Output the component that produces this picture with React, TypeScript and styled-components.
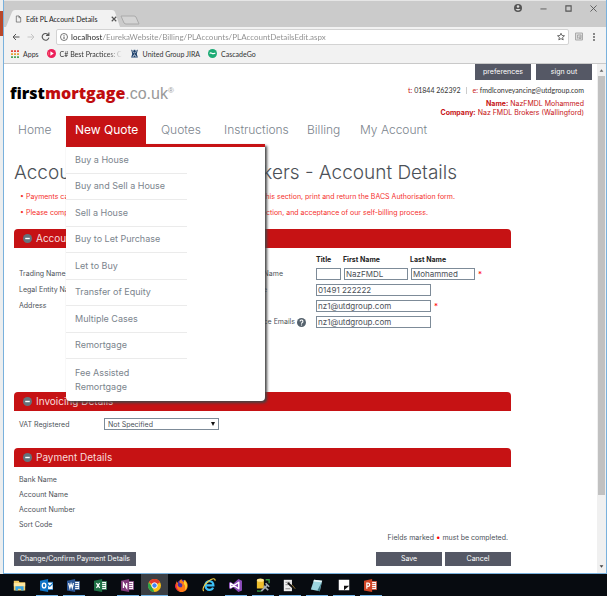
import React from 'react';
import styled, { createGlobalStyle, css } from 'styled-components';

const RED = '#c61214';
const SLATE = '#555865';
const GREY = '#7b848d';

const Global = createGlobalStyle`
  *, *::before, *::after { box-sizing: border-box; }
  body { margin: 0; background: #e9ebed; font-family: Inter, "Liberation Sans", sans-serif; }
  button, input, select { font: inherit; color: inherit; margin: 0; }
  ul { list-style: none; margin: 0; padding: 0; }
  a { color: inherit; text-decoration: none; }
`;

const Desktop = styled.div`
  min-height: 100vh;
  display: flex;
  flex-direction: column;
  background: #000;
`;
const Stage = styled.div`
  flex: 1;
  display: flex;
  background: #e4e8eb;
`;
const BackWindow = styled.div`
  width: 3px;
  display: flex;
  flex-direction: column;
  background: #eceeef;
  padding-top: 11px;
`;
const BackStripe = styled.span`
  height: 25px;
  background: #b9472a;
`;
const Window = styled.div`
  flex: 1;
  min-width: 0;
  display: flex;
  flex-direction: column;
  background: #fff;
  border: solid #79b1dd;
  border-width: 0 1px 1px;
`;

/* Browser chrome */
const TitleBar = styled.header`
  height: 27px;
  border-top: 1px solid #e6e6e6;
  background: #cbcbcb;
  display: flex;
  align-items: flex-end;
  justify-content: space-between;
`;
const Tabs = styled.div`
  display: flex;
  padding-left: 2px;
  align-items: flex-end;
`;
const Tab = styled.div`
  position: relative;
  display: flex;
  align-items: center;
  gap: 4px;
  height: 17px;
  width: 114px;
  padding-left: 9px;
  font: 7px/16px Lato, sans-serif;
  color: #222;
  white-space: nowrap;
`;
const TabShape = styled.svg`
  position: absolute;
  inset: 0;
`;
const TabText = styled.span`
  position: relative;
  flex: 1;
`;
const IconButton = styled.button<{ $w?: number }>`
  position: relative;
  display: flex;
  align-items: center;
  justify-content: center;
  width: ${(p) => p.$w ?? 10}px;
  height: 12px;
  padding: 0;
  border: 0;
  background: none;
  flex: none;
`;
const NewTab = styled(IconButton)`
  height: 15px;
`;
const WindowButtons = styled.div`
  display: flex;
  align-self: flex-start;
  gap: 15px;
  padding: 1px 8px 0 0;
`;
const Toolbar = styled.div`
  height: 19px;
  display: flex;
  align-items: center;
  gap: 6px;
  padding: 0 7px;
  background: #f2f2f2;
`;
const Address = styled.div`
  flex: 1;
  display: flex;
  align-items: center;
  height: 16px;
  padding: 0 3px;
  background: #fff;
  border: 1px solid #d3d3d3;
  border-radius: 2px;
`;
const UrlInput = styled.input`
  flex: 1;
  min-width: 0;
  padding: 0 0 0 3px;
  border: 0;
  outline: 0;
  font: 8px/14px Lato, sans-serif;
  color: transparent;
  background: linear-gradient(90deg, #222 34px, #8c8c8c 34px);
  background-clip: text;
  -webkit-background-clip: text;
`;
const Bookmarks = styled.nav`
  height: 18px;
  display: flex;
  align-items: center;
  gap: 8px;
  padding: 0 7px 2px;
  background: #f2f2f2;
  border-bottom: 1px solid #c9c9c9;
  font: 7px/14px Lato, sans-serif;
  color: #333;
`;
const Bookmark = styled.a<{ $fade?: boolean }>`
  display: flex;
  align-items: center;
  gap: 4px;
  white-space: nowrap;
  ${(p) => p.$fade && css`
    width: 75px;
    mask-image: linear-gradient(90deg, #000 80%, transparent);
  `}
  svg { flex: none; }
`;

/* Page */
const Viewport = styled.div`
  flex: 1;
  display: flex;
`;
const Page = styled.div`
  flex: 1;
  min-width: 0;
  color: #4c5158;
`;
const Scroll = styled.div`
  width: 9px;
  background: #f0f0f0;
  display: flex;
  flex-direction: column;
  align-items: center;
  padding: 4px 0;
  gap: 3px;
`;
const Thumb = styled.span`
  flex: 1;
  width: 7px;
  margin-bottom: 66px;
  background: #c1c1c1;
`;
const Header = styled.header`
  display: flex;
  justify-content: space-between;
  height: 52px;
  padding: 0 5px 0 6px;
`;
const Logo = styled.a`
  padding-top: 18px;
  font: 800 16px/22px "Open Sans", sans-serif;
  color: #000;
  white-space: nowrap;
`;
const LogoRed = styled.span`color: #c00d0f;`;
const LogoGrey = styled.span`
  font: 16px/22px "Liberation Sans", sans-serif;
  color: #999;
  sup { font-size: 8px; line-height: 8px; }
`;
const Account = styled.div`
  display: flex;
  flex-direction: column;
  align-items: flex-end;
`;
const AccountButtons = styled.div`
  display: flex;
  gap: 5px;
  margin-bottom: 5px;
`;
const Button = styled.button<{ $w: number; $h: number }>`
  width: ${(p) => p.$w}px;
  height: ${(p) => p.$h}px;
  padding: 0;
  border: 0;
  background: ${SLATE};
  color: #fff;
  font-size: 7px;
  line-height: 10px;
  white-space: nowrap;
`;
const Contact = styled.div`
  display: flex;
  align-items: center;
  margin: 0 8px 4px 0;
  font-family: Lato, sans-serif;
  font-size: 7px;
  line-height: 10px;
  color: #333;
  i { font-style: normal; color: ${RED}; }
  span + span { margin-left: 5px; padding-left: 6px; border-left: 1px solid #ccc; line-height: 7px; }
`;
const Who = styled.div`
  margin-right: 8px;
  font-size: 7px;
  line-height: 9px;
  color: ${RED};
`;
const Nav = styled.ul`
  display: flex;
  gap: 6px;
  padding-left: 5px;
  height: 28px;
  font-size: 12px;
  line-height: 28px;
  color: ${GREY};
`;
const NavItem = styled.li<{ $w: number; $open?: boolean }>`
  position: relative;
  width: ${(p) => p.$w}px;
  padding-left: 9px;
  font-weight: 300;
  white-space: nowrap;
  ${(p) => p.$open && css`background: ${RED}; color: #fff; font-weight: 400;`}
`;
const Menu = styled.ul`
  position: absolute;
  z-index: 2;
  top: 28px;
  left: 0;
  width: 199px;
  height: 257px;
  display: grid;
  grid-template-rows: repeat(8, 1fr) 42px;
  padding: 0 78px 0 0;
  background: #fff;
  border-top: 3px solid ${RED};
  border-radius: 0 0 4px 4px;
  box-shadow: 2px 2px 3px #444;
  color: ${GREY};
  font-size: 9px;
  font-weight: 400;
`;
const MenuItem = styled.li`
  display: flex;
  align-items: center;
  padding-left: 9px;
  line-height: 14px;
  white-space: normal;
  border-bottom: 1px solid #ebebeb;
  &:last-child { border: 0; padding-right: 40px; }
`;
const Main = styled.main`
  padding: 17px 86px 7px 10px;
`;
const Title = styled.h1`
  display: flex;
  justify-content: space-between;
  width: 443px;
  margin: 0;
  font-size: 19px;
  line-height: 24px;
  font-weight: 300;
  white-space: nowrap;
`;
const Notes = styled.ul`
  padding: 4px 0 8px 6px;
  font-size: 7px;
  line-height: 16px;
  color: #f5302c;
  white-space: nowrap;
`;
const Note = styled.li<{ $w: number }>`
  display: flex;
  justify-content: space-between;
  width: ${(p) => p.$w}px;
`;
const Section = styled.section<{ $h: number }>`
  min-height: ${(p) => p.$h}px;
`;
const Bar = styled.h2`
  display: flex;
  align-items: center;
  gap: 4px;
  height: 19px;
  margin: 0;
  padding: 0 9px 1px;
  background: ${RED};
  border-radius: 4px 4px 0 0;
  color: #f8dcdc;
  font-size: 10px;
  font-weight: 400;
`;
const Columns = styled.div<{ $top: number }>`
  display: grid;
  grid-template-columns: 200px 1fr;
  padding: ${(p) => p.$top}px 0 0 5px;
  font-size: 7px;
`;
const Labels = styled.div<{ $line: number; $top?: number }>`
  padding-top: ${(p) => p.$top ?? 0}px;
  line-height: ${(p) => p.$line}px;
`;
const Fields = styled.div`
  display: grid;
  grid-template-columns: 95px 1fr;
  column-gap: 2px;
  row-gap: 4px;
  align-items: center;
`;
const FieldLabel = styled.label<{ $end: number }>`
  display: flex;
  align-items: center;
  justify-content: flex-end;
  gap: 2px;
  padding-right: ${(p) => p.$end}px;
  line-height: 12px;
  white-space: nowrap;
`;
const Line = styled.div`
  display: flex;
  align-items: center;
  gap: 3px;
  line-height: 8px;
`;
const Head = styled.label<{ $w: number }>`
  width: ${(p) => p.$w}px;
  font-weight: 700;
  color: #222;
`;
const TextBox = styled.input<{ $w: number }>`
  width: ${(p) => p.$w}px;
  height: 12px;
  padding: 0 1px;
  border: 1px solid #7d8b98;
  background: #fff;
  font-size: 8px;
`;
const Star = styled.span`
  color: #f00;
  font-size: 8px;
`;
const FormRow = styled.div`
  display: flex;
  align-items: center;
  padding: 7px 0 0 5px;
  font-size: 7px;
  label { width: 85px; }
`;
const SelectWrap = styled.span`
  position: relative;
  display: flex;
  &::after {
    content: '';
    position: absolute;
    right: 4px;
    top: 4px;
    border: solid transparent;
    border-width: 4px 2px 0;
    border-top-color: #111;
    pointer-events: none;
  }
`;
const Select = styled.select`
  appearance: none;
  width: 115px;
  height: 12px;
  padding: 0 3px;
  border: 1px solid #7d8b98;
  border-radius: 0;
  background: #fff;
  font-size: 7px;
`;
const Required = styled.p`
  margin: 0;
  padding-right: 3px;
  text-align: right;
  font-size: 7px;
  line-height: 10px;
`;
const Actions = styled.div`
  display: flex;
  gap: 3px;
  padding-top: 9px;
  button:first-child { margin-right: auto; }
`;

/* Taskbar */
const Taskbar = styled.footer`
  height: 22px;
  display: flex;
  padding-left: 6px;
  background: #070b10;
`;
const Task = styled.button<{ $running?: boolean; $active?: boolean }>`
  width: 27px;
  height: 22px;
  padding: 0;
  border: 0;
  display: flex;
  align-items: center;
  justify-content: center;
  background: ${(p) => (p.$active ? '#3b3f44' : 'none')};
  ${(p) => p.$running && css`
    background-image: linear-gradient(#76b9ed, #76b9ed);
    background-size: ${p.$active ? '27px' : '22px'} 1px;
    background-position: center bottom;
    background-repeat: no-repeat;
  `}
`;

const Svg = ({ s = 10, v = 16, children }: { s?: number; v?: number; children: React.ReactNode }) => (
  <svg width={s} height={s} viewBox={`0 0 ${v} ${v}`} fill="none" stroke="#555" strokeWidth="2" aria-hidden="true">{children}</svg>
);

const Minus = () => (
  <Svg s={9}><circle cx="8" cy="8" r="8" fill="#64737c" stroke="none" /><path d="M4 8h8" stroke="#fff" strokeWidth="2.5" /></Svg>
);

const Office = ({ color, children }: { color: string; children: React.ReactNode }) => (
  <Svg s={13}>
    <path d="M8 3h7.5v10H8z" fill="#fff" stroke={color} strokeWidth="1" />
    <path d="M10 5.5h4M10 8h4M10 10.500h4" stroke={color} strokeWidth="1" />
    <path d="M0 2l10-2v16L0 14z" fill={color} stroke="none" />
    <g stroke="#fff" strokeWidth="1.500">{children}</g>
  </Svg>
);

const tasks: { name: string; running?: boolean; active?: boolean; icon: React.ReactNode }[] = [
  { name: 'File Explorer', icon: <Svg s={13}><path d="M1 2h6l1 2h7v10H1z" fill="#f5cf68" stroke="none" /><path d="M1 5h14v4H1z" fill="#ffe8a0" stroke="none" /><path d="M3 14V9h10v5h-3v-2H6v2z" fill="#37a6e6" stroke="none" /></Svg> },
  { name: 'Outlook', running: true, icon: <Svg s={13}><path d="M8 4h8v9H8z" fill="#fff" stroke="#1279c8" strokeWidth="1" /><path d="M8 5l4 4 4-4" stroke="#1279c8" strokeWidth="1.500" /><path d="M0 2l10-2v16L0 14z" fill="#0f74c6" stroke="none" /><ellipse cx="5" cy="8" rx="2.200" ry="3" stroke="#fff" strokeWidth="1.600" /></Svg> },
  { name: 'Word', running: true, icon: <Office color="#2b5797"><path d="M2 5l1.500 6L5 6l1.500 5L8 5" /></Office> },
  { name: 'Excel', icon: <Office color="#1e7145"><path d="M3 5l4 6M7 5l-4 6" /></Office> },
  { name: 'OneNote', running: true, icon: <Office color="#80397b"><path d="M3 11V5l4 6V5" /></Office> },
  { name: 'Chrome', running: true, active: true, icon: <Svg s={13}><circle cx="8" cy="8" r="8" fill="#fbc116" stroke="none" /><path d="M8 8L1.070 4A8 8 0 0 1 14.930 4z" fill="#e33b2e" stroke="none" /><path d="M1.070 4L5 10.500 8 16A8 8 0 0 1 1.070 4z" fill="#2ba24c" stroke="none" /><circle cx="8" cy="8" r="3.300" fill="#4285f4" stroke="#fff" strokeWidth="1.200" /></Svg> },
  { name: 'Firefox', icon: <Svg s={13}><circle cx="8.500" cy="7" r="6" fill="#4b2fa8" stroke="none" /><path d="M2 3c-3 6 0 13 6 13 6 0 9-6 7-11-1-2-2-3-3-4 1 3 0 4 0 4-2-3-4-2-4-5-3 2-3 4-2 5 3 0 4 3 2 5-3 1-6-2-4-5-1 0-2-1-2-4z" fill="#ff7a18" stroke="none" /><path d="M11 1c5 4 5 10 1 13 1-3 1-6-1-8z" fill="#ffd02e" stroke="none" /><path d="M2 5c-1 5 1 9 5 10-4 0-7-3-7-6 0-2 1-3 2-4z" fill="#e81f45" stroke="none" /></Svg> },
  { name: 'Internet Explorer', icon: <Svg s={14}><path d="M4 8.500h9c0-3-2-5-4.500-5S4 5.500 4 8.500s2 5 4.500 5c2 0 3.500-1 4.200-2.500" stroke="#3cc0f5" strokeWidth="2.600" /><path d="M2 15c-2-2 0-7 5-11s8-4 8-1" stroke="#f4ce3f" strokeWidth="1.300" /></Svg> },
  { name: 'Visual Studio', running: true, icon: <Svg s={13}><path d="M11.500 0L16 2v12l-4.500 2L5 10 2 12.500 0 11.500v-7l2-1L5 6z" fill="#8a4bb8" stroke="none" /><path d="M2 5.500v5L12 4v8z" stroke="#fff" strokeWidth="1.800" strokeLinejoin="round" /></Svg> },
  { name: 'SQL Server Management Studio', running: true, icon: <Svg s={14}><path d="M1 2h8v10H1z" fill="#efbf2c" stroke="none" /><ellipse cx="5" cy="2.500" rx="4" ry="1.800" fill="#ffe58a" stroke="none" /><path d="M11 2h4v4M2 14v1h4" stroke="#3d9b45" strokeWidth="1.500" /><path d="M6 15l7-7M9 9l5 5M11 6l4 4" stroke="#a5adb2" /></Svg> },
  { name: 'Script Editor', running: true, icon: <Svg s={13}><path d="M1 1h10v14H1z" fill="#eee" stroke="none" /><path d="M3 4h6M3 7h3M3 12h6" stroke="#777" strokeWidth="1" /><path d="M6 5l8 7" stroke="#111" strokeWidth="2.500" /><path d="M11 7l4 5" stroke="#a9843b" strokeWidth="1" /></Svg> },
  { name: 'Notepad', running: true, icon: <Svg s={13}><path d="M5 1l10 1-3 13-11-2z" fill="#9dd5df" stroke="none" /><path d="M5 1l10 1-1 2-10-1z" fill="#e7f5f7" stroke="none" /><path d="M9 14l5-9-2 10z" fill="#3c7683" stroke="none" /></Svg> },
  { name: 'Sticky Notes', running: true, icon: <Svg s={12}><path d="M1 1h14v14H1z" fill="#fff" stroke="none" /><path d="M8 15V9h7z" fill="#111" stroke="none" /></Svg> },
  { name: 'PowerPoint', running: true, icon: <Office color="#d04525"><path d="M3.500 12V5H5a2 2 0 0 1 0 4H3.500" /></Office> },
];

const menu = ['Buy a House', 'Buy and Sell a House', 'Sell a House', 'Buy to Let Purchase', 'Let to Buy', 'Transfer of Equity', 'Multiple Cases', 'Remortgage', 'Fee Assisted Remortgage'];

export default function App() {
  return (
    <Desktop>
      <Global />
      <Stage>
        <BackWindow><BackStripe /></BackWindow>
        <Window>
          <TitleBar>
            <Tabs>
              <Tab>
                <TabShape width="114" height="17" viewBox="0 0 114 17" aria-hidden="true"><path d="M0 17L6 2q1-2 3-2h97q2 0 3 2l5 15z" fill="#f2f2f2" /></TabShape>
                <IconButton as="span" $w={7}><Svg s={8}><path d="M3 1h6l4 4v10H3zM9 1v4h4" strokeWidth="1.500" /></Svg></IconButton>
                <TabText>Edit PL Account Details</TabText>
                <IconButton $w={26} aria-label="Close tab"><Svg s={6}><path d="M2 2l12 12M14 2L2 14" strokeWidth="3" /></Svg></IconButton>
              </Tab>
              <NewTab $w={20} aria-label="New tab"><svg width="20" height="10" viewBox="0 0 20 10"><path d="M1 1h13q1 0 2 1l3 7H6q-1 0-2-1z" fill="#d4d4d4" stroke="#aaa" /></svg></NewTab>
            </Tabs>
            <WindowButtons>
              <IconButton aria-label="Profile"><Svg s={8}><circle cx="8" cy="8" r="8" fill="#555" stroke="none" /><circle cx="8" cy="5" r="2.500" fill="#ddd" stroke="none" /><path d="M3 10h10q-5 6-10 0" fill="#ddd" stroke="none" /></Svg></IconButton>
              <IconButton aria-label="Minimize"><Svg s={7}><path d="M1 9h14" /></Svg></IconButton>
              <IconButton aria-label="Maximize"><Svg s={7}><path d="M2 2h12v12H2z" strokeWidth="2.500" /></Svg></IconButton>
              <IconButton aria-label="Close"><Svg s={7}><path d="M1 1l14 14M15 1L1 15" /></Svg></IconButton>
            </WindowButtons>
          </TitleBar>
          <Toolbar>
            <IconButton $w={9} aria-label="Back"><Svg s={8}><path d="M15 8H2M8 2L2 8l6 6" /></Svg></IconButton>
            <IconButton $w={9} aria-label="Forward"><Svg s={8}><path d="M1 8h13M8 2l6 6-6 6" stroke="#c6c6c6" /></Svg></IconButton>
            <IconButton $w={9} aria-label="Reload"><Svg s={9}><path d="M13 5a6 6 0 1 0 1 5M14 1v5H9" /></Svg></IconButton>
            <Address>
              <Svg s={8}><circle cx="8" cy="8" r="7" strokeWidth="1.600" /><path d="M8 7v5M8 4v1.500" /></Svg>
              <UrlInput aria-label="Address" defaultValue="localhost/EurekaWebsite/Billing/PLAccounts/PLAccountDetailsEdit.aspx" />
              <IconButton $w={8} aria-label="Bookmark"><Svg s={9}><path d="M8 1.500l2 4.500 5 .5-3.800 3.300 1.200 5L8 12.200l-4.400 2.600 1.200-5L1 6.500 6 6z" strokeWidth="1.700" /></Svg></IconButton>
            </Address>
            <IconButton $w={8} aria-label="Extension"><Svg s={9}><path d="M1 1h14v14H1z" fill="#ddd" stroke="#aaa" /><path d="M5 12V5h7v7H8V9h4" stroke="#999" strokeWidth="1.500" /></Svg></IconButton>
            <IconButton aria-label="Menu"><Svg s={8}><g fill="#555" stroke="none"><circle cx="8" cy="2" r="1.800" /><circle cx="8" cy="8" r="1.800" /><circle cx="8" cy="14" r="1.800" /></g></Svg></IconButton>
          </Toolbar>
          <Bookmarks>
            <Bookmark href="#"><Svg s={8}><g strokeWidth="3.500" strokeDasharray="4 2"><path d="M0 2h16" stroke="#e24a3b" /><path d="M0 8h16" stroke="#e6a23a" /><path d="M0 14h16" stroke="#4fa65a" /></g></Svg>Apps</Bookmark>
            <Bookmark href="#" $fade><Svg s={9}><circle cx="8" cy="8" r="8" fill="#ec1f5a" stroke="none" /><path d="M6 4l6 4-6 4z" fill="#fff" stroke="none" /><path d="M3 5v6" stroke="#ff9f77" strokeWidth="1" /></Svg>C# Best Practices: Co</Bookmark>
            <Bookmark href="#"><Svg s={9}><path d="M2 1l6 4 6-4-2 8 2 6H2l2-6z" fill="#1b3f6b" stroke="none" /><circle cx="8" cy="4" r="3" fill="#1b3f6b" stroke="#fff" strokeWidth="1" /><path d="M5 14l3-4 3 4" stroke="#fff" strokeWidth="1.500" /></Svg>United Group JIRA</Bookmark>
            <Bookmark href="#"><Svg s={9}><circle cx="8" cy="8" r="8" fill="#1dab75" stroke="none" /><path d="M3 8c3-4 4 3 10-1" stroke="#fff" /></Svg>CascadeGo</Bookmark>
          </Bookmarks>
          <Viewport>
            <Page>
              <Header>
                <Logo href="#">first<LogoRed>mortgage</LogoRed><LogoGrey>.co.uk<sup>®</sup></LogoGrey></Logo>
                <Account>
                  <AccountButtons>
                    <Button $w={56} $h={16}>preferences</Button>
                    <Button $w={56} $h={16}>sign out</Button>
                  </AccountButtons>
                  <Contact><span><i>t:</i> 01844 262392</span><span><i>e:</i> fmdlconveyancing@utdgroup.com</span></Contact>
                  <Who><b>Name:</b> NazFMDL Mohammed</Who>
                  <Who><b>Company:</b> Naz FMDL Brokers (Wallingford)</Who>
                </Account>
              </Header>
              <Nav>
                <NavItem $w={51}><a href="#">Home</a></NavItem>
                <NavItem $w={80} $open>
                  <a href="#">New Quote</a>
                  <Menu>{menu.map((m) => <MenuItem key={m}><a href="#">{m}</a></MenuItem>)}</Menu>
                </NavItem>
                <NavItem $w={57}><a href="#">Quotes</a></NavItem>
                <NavItem $w={77}><a href="#">Instructions</a></NavItem>
                <NavItem $w={47}><a href="#">Billing</a></NavItem>
                <NavItem $w={84}><a href="#">My Account</a></NavItem>
              </Nav>
              <Main>
                <Title><span>Account: Naz</span><span>Brokers - Account Details</span></Title>
                <Notes>
                  <Note $w={435}><span>• Payments can only be made</span><span>this section, print and return the BACS Authorisation form.</span></Note>
                  <Note $w={408}><span>• Please complete the</span><span>section, and acceptance of our self-billing process.</span></Note>
                </Notes>
                <Section $h={163}>
                  <Bar><Minus />Account Details</Bar>
                  <Columns $top={8}>
                    <Labels $top={10} $line={16}><div>Trading Name</div><div>Legal Entity Name</div><div>Address</div></Labels>
                    <Fields>
                      <span />
                      <Line><Head $w={24} htmlFor="title">Title</Head><Head $w={64} htmlFor="first">First Name</Head><Head $w={64} htmlFor="last">Last Name</Head></Line>
                      <FieldLabel $end={31} htmlFor="first">Contact Name</FieldLabel>
                      <Line><TextBox id="title" $w={25} /><TextBox id="first" $w={64} defaultValue="NazFMDL" /><TextBox id="last" $w={64} defaultValue="Mohammed" /><Star>*</Star></Line>
                      <FieldLabel $end={47} htmlFor="phone">Telephone</FieldLabel>
                      <Line><TextBox id="phone" $w={115} defaultValue="01491 222222" /></Line>
                      <FieldLabel $end={55} htmlFor="email">Email</FieldLabel>
                      <Line><TextBox id="email" $w={115} defaultValue="nz1@utdgroup.com" /><Star>*</Star></Line>
                      <FieldLabel $end={8} htmlFor="remit">Invoice Emails<Svg s={9}><circle cx="8" cy="8" r="8" fill="#55626d" stroke="none" /><path d="M5.500 6a2.500 2.500 0 1 1 3.500 2.300q-1 .5-1 1.700M8 11.500v2" stroke="#fff" /></Svg></FieldLabel>
                      <Line><TextBox id="remit" $w={115} defaultValue="nz1@utdgroup.com" /></Line>
                    </Fields>
                  </Columns>
                </Section>
                <Section $h={56}>
                  <Bar><Minus />Invoicing Details</Bar>
                  <FormRow>
                    <label htmlFor="vat">VAT Registered</label>
                    <SelectWrap><Select id="vat"><option>Not Specified</option></Select></SelectWrap>
                  </FormRow>
                </Section>
                <Section $h={84}>
                  <Bar><Minus />Payment Details</Bar>
                  <Columns $top={5}><Labels $line={15}><div>Bank Name</div><div>Account Name</div><div>Account Number</div><div>Sort Code</div></Labels></Columns>
                </Section>
                <Required>Fields marked <Star>•</Star> must be completed.</Required>
                <Actions>
                  <Button $w={122} $h={14}>Change/Confirm Payment Details</Button>
                  <Button $w={66} $h={14}>Save</Button>
                  <Button $w={66} $h={14}>Cancel</Button>
                </Actions>
              </Main>
            </Page>
            <Scroll>
              <Svg s={5}><path d="M2 12l6-8 6 8z" fill="#666" stroke="none" /></Svg>
              <Thumb />
              <Svg s={5}><path d="M2 4l6 8 6-8z" fill="#444" stroke="none" /></Svg>
            </Scroll>
          </Viewport>
        </Window>
      </Stage>
      <Taskbar>
        {tasks.map((t) => <Task key={t.name} aria-label={t.name} $running={t.running} $active={t.active}>{t.icon}</Task>)}
      </Taskbar>
    </Desktop>
  );
}
